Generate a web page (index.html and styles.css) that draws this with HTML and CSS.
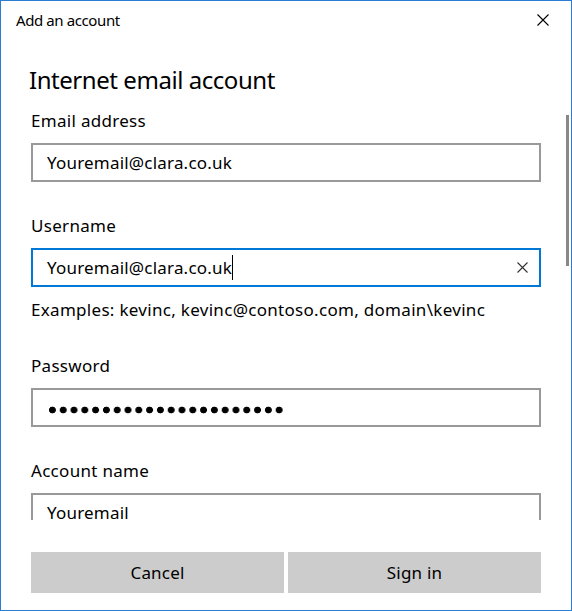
FILE: index.html
```html
<!DOCTYPE html>
<html lang="en">
<head>
<meta charset="utf-8">
<title>Add an account</title>
<link rel="stylesheet" href="styles.css">
</head>
<body>
<div class="window">
  <div class="titlebar">
    <span class="title">Add an account</span>
    <svg class="close" width="12" height="12" viewBox="0 0 12 12" aria-hidden="true">
      <path d="M0.5 0.5 L11.5 11.5 M11.5 0.5 L0.5 11.5" stroke="#000" stroke-width="1.1" fill="none"/>
    </svg>
  </div>
  <h1 class="heading">Internet email account</h1>
  <div class="scroll">
    <div class="fields">
      <div class="field">
        <div class="label">Email address</div>
        <div class="input"><span class="value">Youremail@clara.co.uk</span></div>
      </div>
      <div class="field">
        <div class="label">Username</div>
        <div class="input focused">
          <span class="value">Youremail@clara.co.uk</span><span class="caret"></span>
          <svg class="clear" width="11" height="11" viewBox="0 0 11 11" aria-hidden="true">
            <path d="M0.5 0.5 L10.5 10.5 M10.5 0.5 L0.5 10.5" stroke="#333" stroke-width="1.1" fill="none"/>
          </svg>
        </div>
        <div class="hint">Examples: kevinc, kevinc@contoso.com, domain\kevinc</div>
      </div>
      <div class="field">
        <div class="label">Password</div>
        <div class="input"><span class="dots"></span></div>
      </div>
      <div class="field">
        <div class="label">Account name</div>
        <div class="input"><span class="value">Youremail</span></div>
      </div>
    </div>
    <div class="scrollbar"><div class="thumb"></div></div>
  </div>
  <div class="footer">
    <button class="btn">Cancel</button>
    <button class="btn">Sign in</button>
  </div>
</div>
</body>
</html>
```
FILE: styles.css
```css
* { box-sizing: border-box; }
html, body { margin: 0; padding: 0; background: #fff; }
body {
  font-family: "Noto Sans", "Open Sans", sans-serif;
  color: #000;
}
.window {
  width: 572px;
  height: 611px;
  border: 1px solid #2b7cd3;
  background: #fff;
  display: flex;
  flex-direction: column;
  overflow: hidden;
}
.titlebar {
  height: 39px;
  display: flex;
  justify-content: space-between;
  align-items: flex-start;
  padding: 0 22px 0 15px;
}
.title {
  font-size: 15px;
  line-height: 20px;
  padding-top: 9px;
  letter-spacing: -0.4px;
}
.close { margin-top: 13px; display: block; }
.heading {
  margin: 24px 0 4px 28px;
  font-size: 24px;
  line-height: 32px;
  font-weight: 400;
  letter-spacing: -0.45px;
}
.scroll {
  height: 420px;
  display: flex;
  overflow: hidden;
  flex: none;
}
.fields {
  width: 510px;
  margin-left: 30px;
  padding-top: 9px;
}
.field { margin-bottom: 32px; }
.label {
  font-size: 17px;
  line-height: 24px;
  margin-bottom: 10px;
  letter-spacing: 0.3px;
}
.input {
  height: 39px;
  border: 2px solid #999;
  display: flex;
  align-items: center;
  padding-left: 14px;
  font-size: 17px;
}
.input.focused { border-color: #0078d7; }
.value { line-height: 35px; white-space: nowrap; letter-spacing: 0.2px; }
.caret {
  width: 1px;
  height: 25px;
  background: #000;
}
.clear { margin-left: auto; margin-right: 11px; display: block; }
.hint {
  font-size: 17px;
  line-height: 24px;
  margin-top: 11px;
  letter-spacing: 0.3px;
}
.dots {
  display: block;
  width: 234px;
  height: 8px;
  margin: 5px 0 0 2px;
  background: radial-gradient(circle at 3.4px 4px, #000 3.1px, transparent 3.7px) 0 0 / 10.8px 8px repeat-x;
}
.scrollbar {
  margin-left: auto;
  margin-right: 2px;
  width: 3px;
  padding-top: 15px;
}
.thumb {
  width: 3px;
  height: 151px;
  background: #888;
}
.footer {
  margin: 32px 0 0 30px;
  width: 510px;
  display: flex;
  gap: 4px;
}
.btn {
  flex: 1;
  height: 41px;
  border: 0;
  background: #ccc;
  font-family: inherit;
  font-size: 17px;
  line-height: 41px;
  color: #000;
  padding: 0;
  letter-spacing: 0.2px;
}
```
